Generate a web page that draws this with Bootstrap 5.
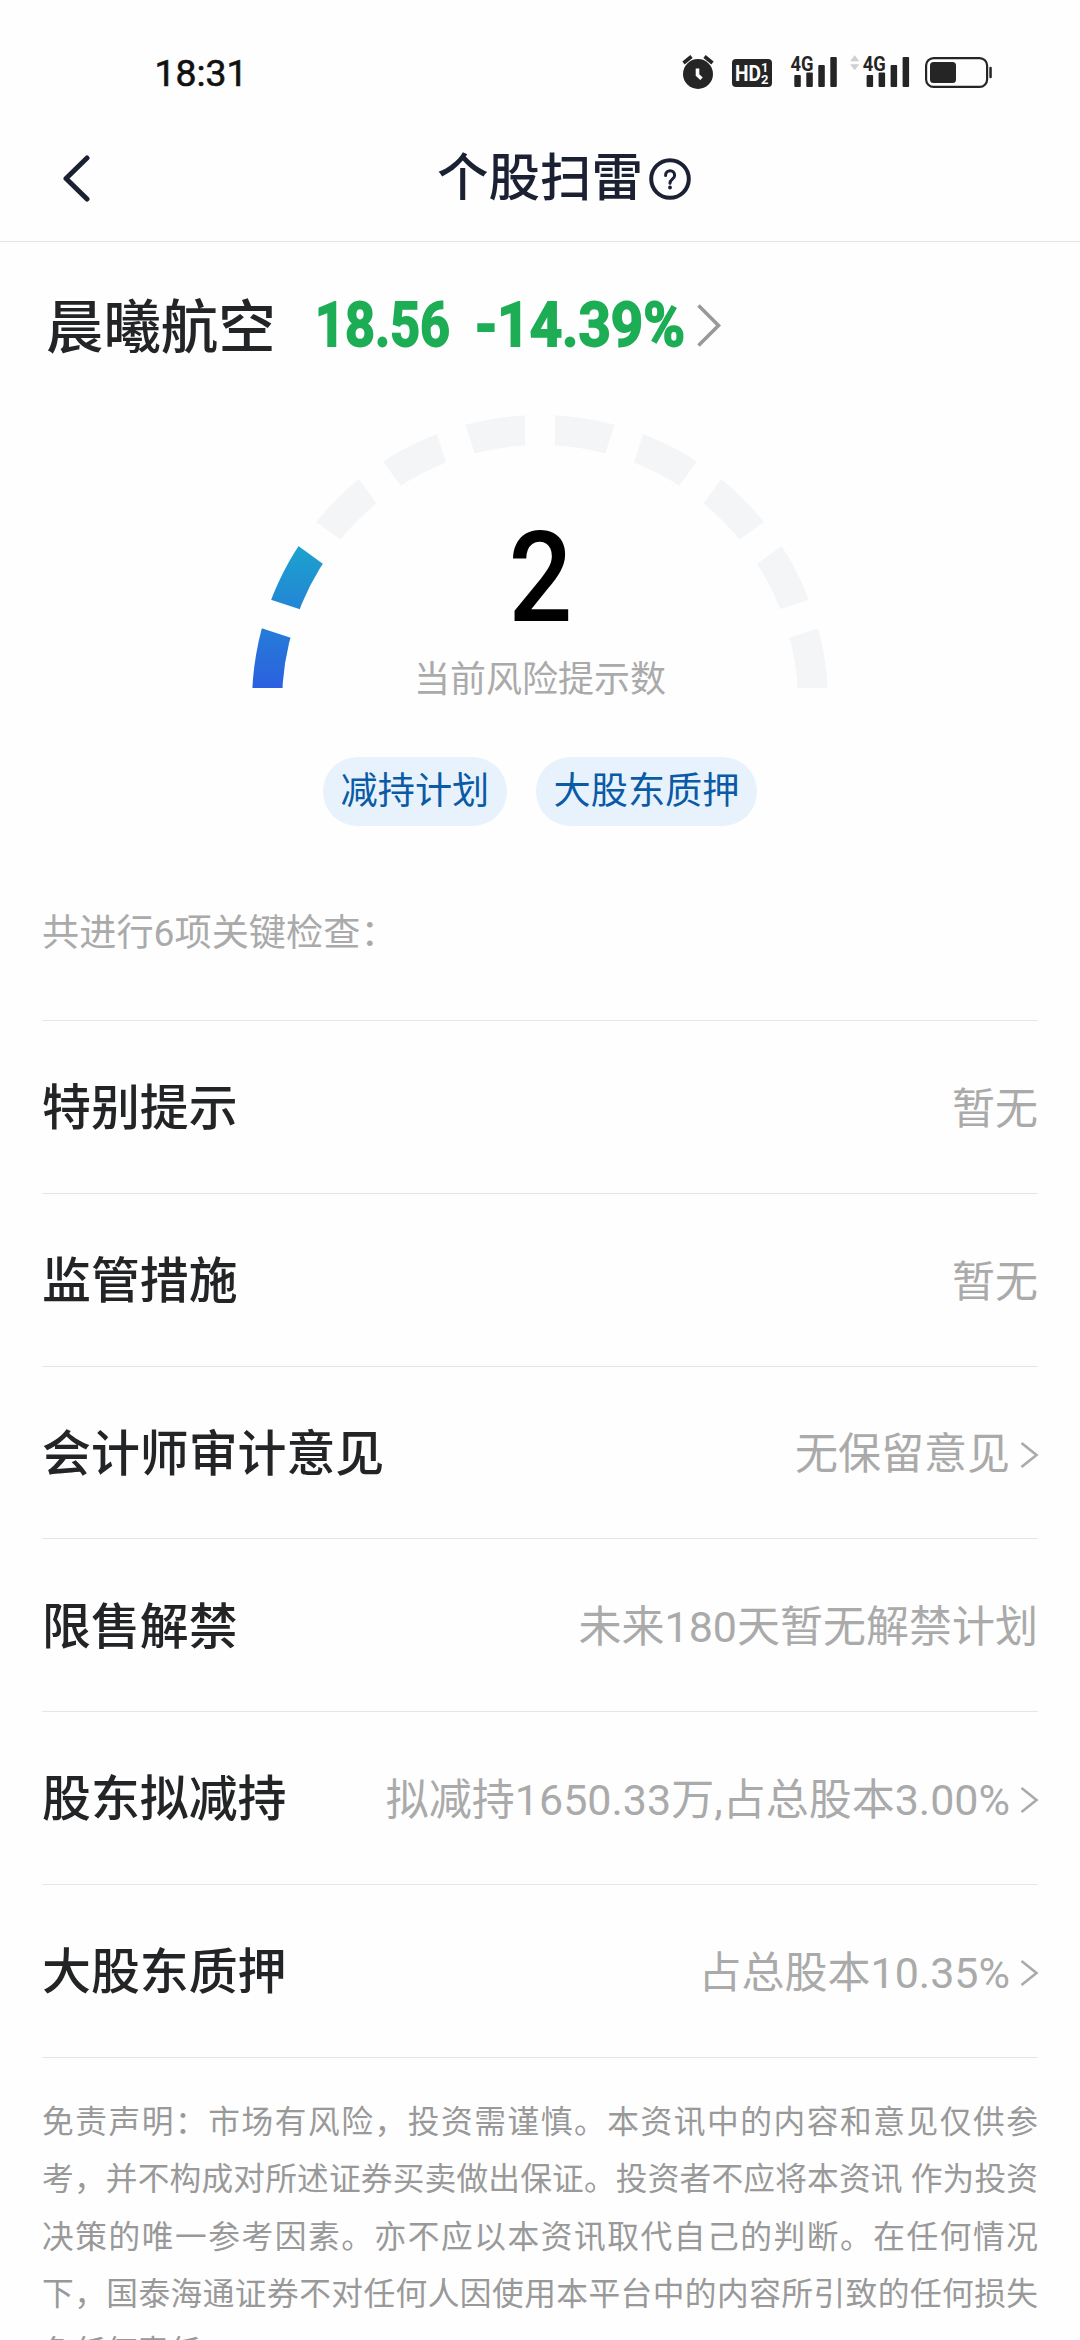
<!DOCTYPE html>
<html lang="zh-CN">
<head>
<meta charset="utf-8">
<meta name="viewport" content="width=device-width, initial-scale=1">
<title>个股扫雷</title>
<link href="https://cdn.jsdelivr.net/npm/bootstrap@5.3.0/dist/css/bootstrap.min.css" rel="stylesheet">
<style>
  body { font-family: Roboto, "Noto Sans CJK SC", sans-serif; background: #fefefe; color: #222426; }
  .screen { height: 2340px; overflow: hidden; }
  .screen svg { display: block; flex: none; }
  svg text { font-family: Roboto, "Noto Sans CJK SC", sans-serif; }
  .status { height: 110px; padding: 0 79px 0 150px; }
  .topbar { height: 132px; border-bottom: 1px solid #e4e5e6; padding: 0 60px; color: #1c2033; }
  .side { width: 32px; }
  .page-title { font-size: 51.5px; line-height: 70px; font-weight: 500; padding: 6px 0 0 49px; }
  .help { margin: 6px 0 0 5px; }
  .quote { height: 168px; padding: 0 46px; }
  .stock { font-size: 57.4px; line-height: 80px; font-weight: 500; padding-top: 5px; }
  .gauge { height: 278px; }
  .gauge-note { fill: #aaa; font-size: 36px; }
  .tags { gap: 29px; margin-top: 69px; }
  .tag { height: 69px; padding: 0 17.6px; font-size: 37.2px; line-height: 69px; background: #e7f2fc; color: #0a5aa5; }
  .checks { margin: 0 42px; }
  .summary { height: 194px; color: #aaa; font-size: 37.2px; line-height: 50px; padding-top: 82px; }
  .check { height: 172.75px; border-top: 1px solid #e4e5e6; }
  .check-name { font-size: 48.9px; line-height: 70px; font-weight: 500; padding-top: 5px; }
  .check-value { font-size: 43px; line-height: 60px; color: #aaa; padding-top: 4px; }
  .check-value svg { margin: 1px -1px 0 10px; }
  .disclaimer { border-top: 1px solid #e4e5e6; padding-top: 36px; font-size: 31.7px; line-height: 57.6px; color: #999; text-align: justify; }
</style>
</head>
<body>
<div class="screen">
  <div class="status d-flex justify-content-between">
    <svg width="110" height="110" viewBox="150 0 110 110"><text x="154.500" y="85.7" font-size="36.500" font-weight="400" fill="#111" stroke="#111" stroke-width=".6" textLength="93" lengthAdjust="spacingAndGlyphs">18:31</text></svg>
    <div class="d-flex">
      <svg width="40" height="110" viewBox="680 0 40 110">
        <circle cx="697" cy="74" r="15" fill="#252525"/>
        <path d="M682.5 63l8-6.500M711.500 63l-8-6.500" stroke="#252525" stroke-width="3.600"/>
        <path d="M696.500 68.500v6.500l4 3.800" fill="none" stroke="#fff" stroke-width="3.600"/>
      </svg>
      <svg width="60" height="110" viewBox="720 0 60 110">
        <rect x="731" y="59" width="40" height="28" rx="4" fill="#252525"/>
        <text x="734" y="81" font-size="22" font-weight="700" fill="#fff" textLength="26" lengthAdjust="spacingAndGlyphs">HD</text>
        <text x="760" y="72" font-size="13" font-weight="700" fill="#fff">1</text>
        <text x="760" y="83.500" font-size="13" font-weight="700" fill="#fff">2</text>
      </svg>
      <svg width="65" height="110" viewBox="780 0 65 110" fill="#252525">
        <rect x="793.300" y="75" width="6.500" height="12" rx="1"/><rect x="805.300" y="72.500" width="6.500" height="14.500" rx="1"/><rect x="817.300" y="65" width="6.500" height="22" rx="1"/><rect x="829.300" y="57" width="6.500" height="30" rx="1"/>
        <text x="789.500" y="70.500" font-size="21" font-weight="700" textLength="23" lengthAdjust="spacingAndGlyphs">4G</text>
      </svg>
      <svg width="70" height="110" viewBox="845 0 70 110" fill="#252525">
        <path d="M849 61.300l4.700-6 4.700 6zM849 64.300l4.700 6 4.700-6z" fill="#d0d0d0"/>
        <rect x="865.600" y="75" width="6.500" height="12" rx="1"/><rect x="877.600" y="72.500" width="6.500" height="14.500" rx="1"/><rect x="889.600" y="65" width="6.500" height="22" rx="1"/><rect x="901.600" y="57" width="6.500" height="30" rx="1"/>
        <text x="861.800" y="70.500" font-size="21" font-weight="700" textLength="23" lengthAdjust="spacingAndGlyphs">4G</text>
      </svg>
      <svg width="85" height="110" viewBox="915 0 85 110">
        <rect x="925.100" y="58.100" width="61" height="28.800" rx="7.500" fill="none" stroke="#252525" stroke-width="2.200"/>
        <rect x="929" y="62" width="26" height="21" rx="3.500" fill="#252525"/>
        <rect x="988.300" y="66.700" width="2.500" height="11.500" rx="1.200" fill="#252525"/>
      </svg>
    </div>
  </div>

  <header class="topbar d-flex align-items-center justify-content-between">
    <div class="side"><svg width="32" height="52" viewBox="60 151 32 52"><path d="M87 159L66 179.500 87 200" fill="none" stroke="#1c2033" stroke-width="5" stroke-linecap="round" stroke-linejoin="round"/></svg></div>
    <div class="d-flex align-items-center">
      <div class="page-title">个股扫雷</div>
      <svg class="help" width="44" height="44" viewBox="0 0 44 44"><circle cx="22" cy="22" r="18.800" fill="none" stroke="#1c2033" stroke-width="4"/><path d="M17.600 18.500c0-6.300 9-6.300 9 0 0 3.700-4.600 3.700-4.600 7.700" fill="none" stroke="#1c2033" stroke-width="3" stroke-linecap="round"/><circle cx="22" cy="30.500" r="1.900" fill="#1c2033"/></svg>
    </div>
    <div class="side"></div>
  </header>

  <section class="quote d-flex align-items-center">
    <div class="stock">晨曦航空</div>
    <svg width="460" height="168" viewBox="276 242 460 168">
      <g fill="#1dad55" stroke="#1dad55" stroke-width="1.800" font-size="61" font-weight="700">
        <text x="315" y="345.500" textLength="135" lengthAdjust="spacingAndGlyphs">18.56</text>
        <text x="475" y="345.500" textLength="210" lengthAdjust="spacingAndGlyphs">-14.39%</text>
      </g>
      <path d="M698.500 305.500L718.500 325.500 698.500 345.500" fill="none" stroke="#999" stroke-width="3.600"/>
    </svg>
  </section>

  <section class="gauge d-flex justify-content-center">
    <svg width="600" height="308" viewBox="240 410 600 308">
      <defs><linearGradient id="level" gradientUnits="userSpaceOnUse" x1="0" y1="690" x2="0" y2="545"><stop offset="0" stop-color="#2c5fe0"/><stop offset="1" stop-color="#1ca3cd"/></linearGradient></defs>
      <g fill="none" stroke-width="30">
        <path d="M267 703A273 273 0 0 1 813 703" stroke="#f3f5f7"/>
        <path d="M267 703A273 273 0 0 1 319.140 542.530" stroke="url(#level)"/>
      </g>
      <g id="gaps" stroke="#fefefe" stroke-width="30"></g>
      <text x="508.500" y="621" font-size="126.500" font-weight="500" textLength="64" lengthAdjust="spacingAndGlyphs" fill="#000">2</text>
      <text class="gauge-note" x="540" y="692" text-anchor="middle">当前风险提示数</text>
    </svg>
  </section>

  <div class="tags d-flex justify-content-center">
    <span class="tag rounded-pill">减持计划</span>
    <span class="tag rounded-pill">大股东质押</span>
  </div>

  <main class="checks">
    <div class="summary">共进行6项关键检查：</div>
    <div class="check d-flex align-items-center justify-content-between"><div class="check-name">特别提示</div><div class="check-value">暂无</div></div>
    <div class="check d-flex align-items-center justify-content-between"><div class="check-name">监管措施</div><div class="check-value">暂无</div></div>
    <div class="check d-flex align-items-center justify-content-between"><div class="check-name">会计师审计意见</div><div class="check-value d-flex align-items-center">无保留意见<svg width="19" height="28" viewBox="0 0 19 28"><path d="M1.500 2L16.500 14 1.500 26" fill="none" stroke="#aaa" stroke-width="2.600"/></svg></div></div>
    <div class="check d-flex align-items-center justify-content-between"><div class="check-name">限售解禁</div><div class="check-value">未来180天暂无解禁计划</div></div>
    <div class="check d-flex align-items-center justify-content-between"><div class="check-name">股东拟减持</div><div class="check-value d-flex align-items-center">拟减持1650.33万,占总股本3.00%<svg width="19" height="28" viewBox="0 0 19 28"><path d="M1.500 2L16.500 14 1.500 26" fill="none" stroke="#aaa" stroke-width="2.600"/></svg></div></div>
    <div class="check d-flex align-items-center justify-content-between"><div class="check-name">大股东质押</div><div class="check-value d-flex align-items-center">占总股本10.35%<svg width="19" height="28" viewBox="0 0 19 28"><path d="M1.500 2L16.500 14 1.500 26" fill="none" stroke="#aaa" stroke-width="2.600"/></svg></div></div>
    <p class="disclaimer mb-0">免责声明：市场有风险，投资需谨慎。本资讯中的内容和意见仅供参考，并不构成对所述证券买卖做出保证。投资者不应将本资讯 作为投资决策的唯一参考因素。亦不应以本资讯取代自己的判断。在任何情况下，国泰海通证券不对任何人因使用本平台中的内容所引致的任何损失负任何责任。</p>
  </main>
</div>
<script>
  // Radial separators split the half ring into ten steps of 18 degrees.
  const gaps = document.getElementById('gaps');
  for (let i = 0; i <= 10; i++) {
    const a = i * Math.PI / 10, line = document.createElementNS('http://www.w3.org/2000/svg', 'line');
    line.setAttribute('x1', 540 - 230 * Math.cos(a));
    line.setAttribute('y1', 703 - 230 * Math.sin(a));
    line.setAttribute('x2', 540 - 295 * Math.cos(a));
    line.setAttribute('y2', 703 - 295 * Math.sin(a));
    gaps.appendChild(line);
  }
</script>
<script src="https://cdn.jsdelivr.net/npm/bootstrap@5.3.0/dist/js/bootstrap.bundle.min.js"></script>
</body>
</html>
